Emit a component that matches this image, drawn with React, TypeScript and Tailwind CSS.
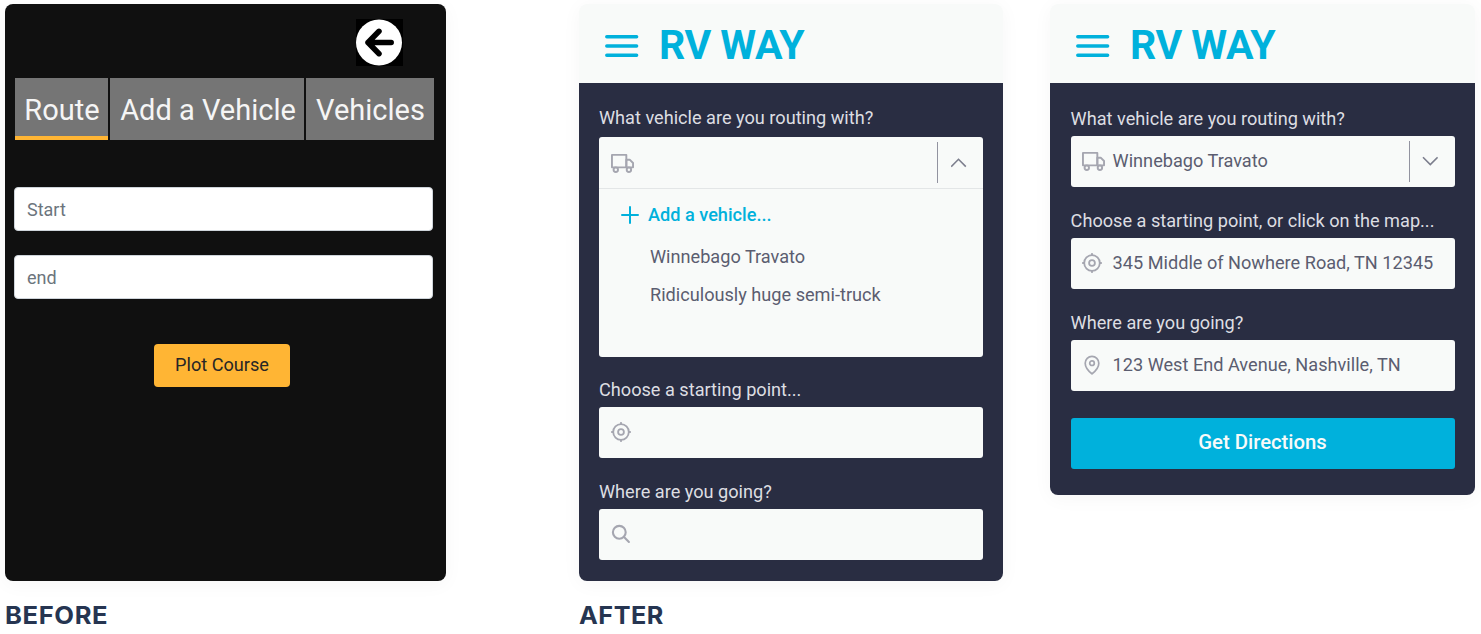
import React from "react";

const VAN = (
  <svg viewBox="0 0 24 24" className="mt-px size-[23px] shrink-0" fill="none" stroke="#a5a6b0" strokeWidth="2" strokeLinejoin="round" strokeLinecap="round">
    <rect x="1" y="3" width="15" height="13" />
    <path d="M16 8h3.500L23 11.500V16h-7z" />
    <circle cx="5" cy="18.500" r="2.300" fill="#f8faf9" />
    <circle cx="18.700" cy="18.500" r="2.300" fill="#f8faf9" />
  </svg>
);

const TARGET = (
  <svg viewBox="0 0 20 20" className="size-5 shrink-0" fill="none" stroke="#a5a6b0" strokeWidth="1.8" strokeLinecap="round">
    <circle cx="10" cy="10" r="7.800" />
    <circle cx="10" cy="10" r="2.900" />
    <path d="M10 .8v1.400M10 17.800v1.400M.8 10h1.400M17.800 10h1.400" />
  </svg>
);

const SEARCH = (
  <svg viewBox="0 0 20 20" className="size-5 shrink-0" fill="none" stroke="#a5a6b0" strokeWidth="2.100" strokeLinecap="round">
    <circle cx="8.300" cy="8.300" r="6.400" />
    <path d="M13 13L17.900 17.900" />
  </svg>
);

const PIN = (
  <svg viewBox="0 0 20 20" className="size-5 shrink-0" fill="none" stroke="#a5a6b0" strokeWidth="1.700" strokeLinejoin="round">
    <path d="M10 18.800C8.600 17.700 3.200 13.600 3.200 8.200a6.800 6.800 0 0 1 13.600 0c0 5.400-5.400 9.500-6.800 10.600Z" />
    <circle cx="10" cy="8.200" r="2.300" />
  </svg>
);

function Header() {
  return (
    <header className="flex h-[79px] items-center rounded-t-[8px] bg-[#f8faf9] pl-[26px]">
      <svg viewBox="0 0 34 24" className="mt-[5px] h-6 w-[34px]" stroke="#00b1dc" strokeWidth="3.500" strokeLinecap="round">
        <path d="M1.800 2.800h29.800M1.800 12h29.800M1.800 21.200h29.800" />
      </svg>
      <h1 className="ml-[20px] mt-[3px] text-[41px] leading-[48px] font-bold tracking-[-0.5px] text-[#00b1dc]">RV WAY</h1>
    </header>
  );
}

function Label({ children }: { children: React.ReactNode }) {
  return <div className="h-[27px] text-[18.15px] leading-[19px] whitespace-nowrap text-[#dddee2]">{children}</div>;
}

function Field({ icon, children }: { icon: React.ReactNode; children?: React.ReactNode }) {
  return (
    <div className="flex h-[51px] items-center rounded-[3px] bg-[#f8faf9] pl-[11.5px] text-[18.15px] whitespace-nowrap text-[#5b5d70]">
      <span className="flex w-[30.5px] items-center">{icon}</span>
      <span>{children}</span>
    </div>
  );
}

function Toggle({ up }: { up?: boolean }) {
  return (
    <div className="flex h-[41px] w-[46px] items-center border-l border-[#9293a0] pl-[12.5px]">
      <svg viewBox="0 0 16 10" className="h-[10px] w-4" fill="none" stroke="#7c7e8d" strokeWidth="1.600">
        <path d={up ? "M.2 8.600L7.500 1.300l7.300 7.300" : "M1 1.300L8.300 8.600l7.300-7.300"} />
      </svg>
    </div>
  );
}

export default function App() {
  return (
    <main className="flex h-[634px] w-[1481px] items-start overflow-hidden bg-white pt-[4px] pl-[5px] font-['Roboto',sans-serif]">
      <section className="w-[441px] shrink-0">
        <div className="h-[577px] rounded-[8px] bg-[#101010] px-[10px] pt-[15px] shadow-[0_3px_20px_rgba(0,0,0,0.04)]">
          <div className="ml-[341px] size-[47px] bg-black">
            <svg viewBox="0 0 47 47" className="size-[47px]" fill="none">
              <circle cx="23" cy="23.500" r="23" fill="#fff" />
              <path d="M35.200 23.500H12M23 12.300L12 23.500 23 34.700" stroke="#000" strokeWidth="5.500" strokeLinecap="round" strokeLinejoin="round" />
            </svg>
          </div>
          <nav className="mt-[12px] flex h-[62px] gap-[2px] text-[29px] leading-[65px] whitespace-nowrap text-[#f5f5f5]">
            <span className="h-[62px] w-[93px] border-b-4 border-[#ffb534] bg-[#757575] pl-px text-center">Route</span>
            <span className="h-[62px] w-[194px] bg-[#757575] pl-[2px] text-center">Add a Vehicle</span>
            <span className="h-[62px] w-[128px] bg-[#757575] pl-px text-center">Vehicles</span>
          </nav>
          <div className="mt-[47px] -ml-px flex h-[44px] w-[419px] items-center rounded-[4px] border border-[#ced4da] bg-white pl-[12px] text-[18px] text-[#6c757d]">Start</div>
          <div className="mt-[24px] -ml-px flex h-[44px] w-[419px] items-center rounded-[4px] border border-[#ced4da] bg-white pl-[12px] text-[18px] text-[#6c757d]">end</div>
          <div className="mt-[45px] ml-[139px] flex h-[43px] w-[136px] items-center justify-center rounded-[4px] bg-[#ffb534] pb-px text-[18.15px] text-[#272626]">Plot Course</div>
        </div>
        <h2 className="mt-[20px] origin-left scale-x-[1.065] font-['Inter',sans-serif] text-[24px] leading-[30px] font-bold tracking-[0.6px] text-[#263551]">BEFORE</h2>
      </section>

      <section className="ml-[133px] w-[424px] shrink-0">
        <div className="flex h-[577px] flex-col rounded-[8px] shadow-[0_3px_20px_rgba(0,0,0,0.04)]">
          <Header />
          <div className="flex-1 rounded-b-[8px] bg-[#292d42] px-[20px] pt-[25px]">
            <Label>What vehicle are you routing with?</Label>
            <div className="mt-[2px] h-[220px] rounded-[3px] bg-[#f8faf9]">
              <div className="flex h-[52px] items-center justify-between border-b border-[#e3e6e7] pl-[12px]">
                {VAN}
                <Toggle up />
              </div>
              <div className="flex h-[52px] items-center pl-[22px] text-[18.15px] font-medium text-[#00b1dc]">
                <svg viewBox="0 0 18 18" className="mr-[9px] size-[18px]" stroke="currentColor" strokeWidth="2" strokeLinecap="round">
                  <path d="M9 1v16M1 9h16" />
                </svg>
                <span>Add a vehicle...</span>
              </div>
              <div className="flex h-8 items-center pl-[51px] text-[18.15px] text-[#5b5d70]">Winnebago Travato</div>
              <div className="mt-[6px] flex h-8 items-center pl-[51px] text-[18.15px] text-[#5b5d70]">Ridiculously huge semi-truck</div>
            </div>
            <div className="mt-[22.500px]">
              <Label>Choose a starting point...</Label>
              <Field icon={TARGET} />
            </div>
            <div className="mt-[24px]">
              <Label>Where are you going?</Label>
              <Field icon={SEARCH} />
            </div>
          </div>
        </div>
        <h2 className="mt-[20px] origin-left scale-x-[1.05] font-['Inter',sans-serif] text-[24px] leading-[30px] font-bold tracking-[0.5px] text-[#263551]">AFTER</h2>
      </section>

      <section className="ml-[47px] flex h-[491px] w-[424.500px] shrink-0 flex-col rounded-[8px] shadow-[0_3px_20px_rgba(0,0,0,0.04)]">
        <Header />
        <div className="flex flex-1 flex-col gap-[24px] rounded-b-[8px] bg-[#292d42] pt-[25.500px] pr-[20px] pl-[20.600px]">
          <div>
            <Label>What vehicle are you routing with?</Label>
            <div className="flex h-[51px] items-center rounded-[3px] bg-[#f8faf9] pl-[11.500px] text-[18.15px] text-[#5b5d70]">
              {VAN}
              <span className="ml-[7.500px] flex-1">Winnebago Travato</span>
              <Toggle />
            </div>
          </div>
          <div>
            <Label>Choose a starting point, or click on the map...</Label>
            <Field icon={TARGET}>345 Middle of Nowhere Road, TN 12345</Field>
          </div>
          <div>
            <Label>Where are you going?</Label>
            <Field icon={PIN}>123 West End Avenue, Nashville, TN</Field>
          </div>
          <button className="mt-[3px] h-[51px] rounded-[3px] bg-[#00b1dc] pb-px text-[20.3px] font-medium text-[#f8faf9]">Get Directions</button>
        </div>
      </section>
    </main>
  );
}
